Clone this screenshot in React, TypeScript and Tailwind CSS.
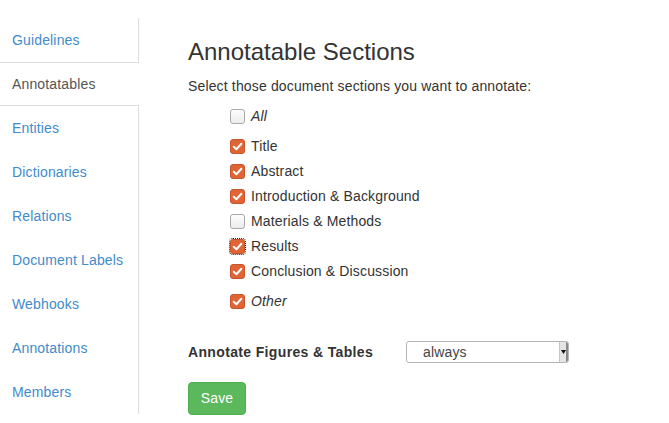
import React from "react";

const tabs = [
  "Guidelines",
  "Annotatables",
  "Entities",
  "Dictionaries",
  "Relations",
  "Document Labels",
  "Webhooks",
  "Annotations",
  "Members",
];

const sections = [
  { label: "Title", checked: true },
  { label: "Abstract", checked: true },
  { label: "Introduction & Background", checked: true },
  { label: "Materials & Methods", checked: false },
  { label: "Results", checked: true, focused: true },
  { label: "Conclusion & Discussion", checked: true },
];

function Box({ checked, focused }: { checked: boolean; focused?: boolean }) {
  return (
    <span
      className={`w-[15px] h-[15px] rounded-[3px] flex items-center justify-center shrink-0 ${
        checked
          ? "bg-[#df6436] border border-[#c9542a]"
          : "bg-gradient-to-b from-[#fdfdfd] to-[#ececec] border border-[#a9a9a9]"
      } ${focused ? "outline outline-1 outline-dotted outline-[#222] outline-offset-0" : ""}`}
    >
      {checked && (
        <svg width="11" height="11" viewBox="0 0 10 10">
          <path d="M1.6 5.2 L4 7.5 L8.5 2.5" fill="none" stroke="#fff" strokeWidth="1.8" strokeLinecap="round" strokeLinejoin="round" />
        </svg>
      )}
    </span>
  );
}

function Row({ label, checked, focused, italic }: { label: string; checked: boolean; focused?: boolean; italic?: boolean }) {
  return (
    <label className="flex items-center h-[25px] gap-[6px]">
      <Box checked={checked} focused={focused} />
      <span className={italic ? "italic" : ""}>{label}</span>
    </label>
  );
}

export default function App() {
  return (
    <div className="w-[669px] h-[423px] bg-white flex text-[14px] text-[#333] tracking-[0.15px] font-['Liberation_Sans',Arial,sans-serif] overflow-hidden">
      {/* Left tabs */}
      <ul className="w-[139px] pt-[18px] shrink-0">
        {tabs.map((t) => {
          const active = t === "Annotatables";
          return (
            <li
              key={t}
              className={`h-[44px] flex items-center pl-[12px] ${
                active ? "border-y border-[#ddd] text-[#555]" : "border-r border-[#ddd] text-[#428bca]"
              }`}
            >
              {t}
            </li>
          );
        })}
      </ul>

      {/* Main */}
      <main className="pl-[49px] pt-[38px] flex-1">
        <h3 className="text-[24px] leading-[28px] font-medium tracking-normal">Annotatable Sections</h3>
        <p className="mt-[10px] leading-[20px]">Select those document sections you want to annotate:</p>
        <div className="pl-[42px] mt-[8px]">
          <Row label="All" checked={false} italic />
          <div className="mt-[5px]">
            {sections.map((s) => (
              <Row key={s.label} label={s.label} checked={s.checked} focused={s.focused} />
            ))}
          </div>
          <div className="mt-[5px]">
            <Row label="Other" checked italic />
          </div>
        </div>

        <div className="flex items-center mt-[27px]">
          <span className="w-[218px] font-bold tracking-[0.35px]">Annotate Figures &amp; Tables</span>
          <div className="relative w-[163px] h-[22px] border border-[#b5b5b5] rounded-[3px] bg-white flex items-center pl-[16px] text-[#444]">
            always
            <span className="absolute right-0 top-0 bottom-0 w-[9px] bg-[#e4e4e4] border-l border-[#c4c4c4] border-r-2 border-r-[#888] rounded-r-[2px] flex items-center justify-center">
              <svg width="5" height="4" viewBox="0 0 5 4">
                <path d="M0 0 H5 L2.5 4 Z" fill="#111" />
              </svg>
            </span>
          </div>
        </div>

        <button className="mt-[19px] w-[58px] h-[33px] rounded-[4px] bg-[#5cb85c] border border-[#4cae4c] text-white">
          Save
        </button>
      </main>
    </div>
  );
}
